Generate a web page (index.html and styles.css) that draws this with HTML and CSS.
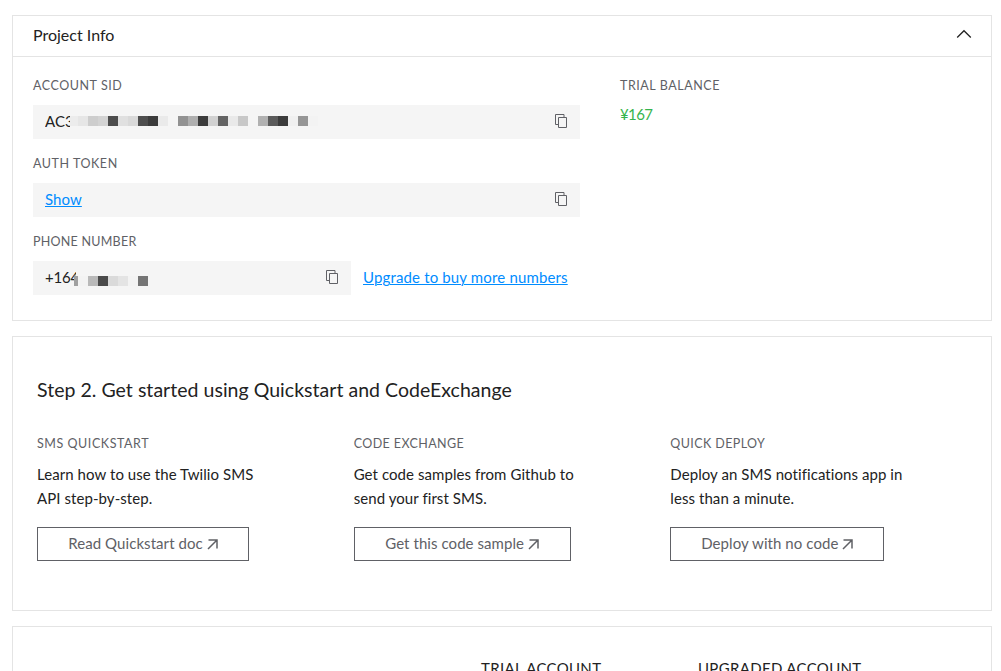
FILE: index.html
```html
<!DOCTYPE html>
<html lang="en">
<head>
<meta charset="utf-8">
<title>Project Info</title>
<link rel="stylesheet" href="styles.css">
</head>
<body>
<svg class="defs" width="0" height="0" aria-hidden="true">
  <symbol id="copy" viewBox="0 0 12 14"><path d="M9 3V.5H.5v10H3M3.5 3.5h8v10h-8z" fill="none" stroke="#606166"/></symbol>
  <symbol id="out" viewBox="0 0 12 12"><path d="M1.5 2H10v8.5M10 2L1 11" fill="none" stroke="currentColor" stroke-width="1.5"/></symbol>
</svg>
<main class="page">
  <section class="card info">
    <header class="card-head">
      <h2 class="head-title">Project Info</h2>
      <svg class="chevron" viewBox="0 0 16 10"><path d="M1.2 8.5L8 1.7l6.8 6.8" fill="none" stroke="#222" stroke-width="1.3"/></svg>
    </header>
    <div class="info-body">
      <div class="credentials">
        <h3 class="label l-sid">ACCOUNT SID</h3>
        <div class="field">
          <span class="value v-sid">AC3</span>
          <svg class="mask mask-sid" viewBox="0 0 250 10" shape-rendering="crispEdges">
            <path fill="#ececec" d="M0 0h8v10H0z"/><path fill="#e6e6e6" d="M8 0h10v10H8z"/><path fill="#cdcdcd" d="M18 0h10v10H18z"/><path fill="#d3d3d3" d="M28 0h10v10H28z"/><path fill="#4d4d4d" d="M38 0h10v10H38z"/><path fill="#e0e0e0" d="M48 0h10v10H48z"/><path fill="#d9d9d9" d="M58 0h10v10H58z"/><path fill="#4e4e4e" d="M68 0h10v10H68z"/><path fill="#3c3c3c" d="M78 0h10v10H78z"/><path fill="#eaeaea" d="M88 0h10v10H88z"/><path fill="#929292" d="M108 0h10v10H108z"/><path fill="#afafaf" d="M118 0h10v10H118z"/><path fill="#3c3c3c" d="M128 0h10v10H128z"/><path fill="#d1d1d1" d="M138 0h10v10H138z"/><path fill="#646464" d="M148 0h10v10H148z"/><path fill="#e9e9e9" d="M158 0h10v10H158z"/><path fill="#c8c8c8" d="M168 0h10v10H168z"/><path fill="#b1b1b1" d="M188 0h10v10H188z"/><path fill="#5b5b5b" d="M198 0h10v10H198z"/><path fill="#3c3c3c" d="M208 0h10v10H208z"/><path fill="#f0f0f0" d="M218 0h10v10H218z"/><path fill="#969696" d="M228 0h10v10H228z"/><path fill="#f3f3f3" d="M238 0h10v10H238z"/>
          </svg>
          <svg class="copy"><use href="#copy"/></svg>
        </div>
        <h3 class="label l-auth">AUTH TOKEN</h3>
        <div class="field"><a class="link show">Show</a><svg class="copy"><use href="#copy"/></svg></div>
        <h3 class="label l-phone">PHONE NUMBER</h3>
        <div class="phone-row">
          <div class="field phone">
            <span class="value v-phone">+164</span>
            <svg class="mask mask-phone" viewBox="0 0 74 10" shape-rendering="crispEdges">
              <path fill="#a0a0a0" d="M0 0h4v10H0z"/><path fill="#f3f3f3" d="M4 0h10v10H4z"/><path fill="#b9b9b9" d="M14 0h10v10H14z"/><path fill="#4a4a4a" d="M24 0h10v10H24z"/><path fill="#dadada" d="M34 0h10v10H34z"/><path fill="#e4e4e4" d="M44 0h10v10H44z"/><path fill="#f3f3f3" d="M54 0h10v10H54z"/><path fill="#757575" d="M64 0h10v10H64z"/>
            </svg>
            <svg class="copy"><use href="#copy"/></svg>
          </div>
          <a class="link upgrade">Upgrade to buy more numbers</a>
        </div>
      </div>
      <div class="balance">
        <h3 class="label l-balance">TRIAL BALANCE</h3>
        <div class="amount">¥167</div>
      </div>
    </div>
  </section>

  <section class="card step">
    <h2 class="step-title">Step 2. Get started using Quickstart and CodeExchange</h2>
    <div class="columns">
      <article>
        <h3 class="label l-sms">SMS QUICKSTART</h3>
        <p class="text">Learn how to use the Twilio SMS<br>API step-by-step.</p>
        <a class="button b1"><span>Read Quickstart doc</span><svg class="out"><use href="#out"/></svg></a>
      </article>
      <article>
        <h3 class="label l-code">CODE EXCHANGE</h3>
        <p class="text">Get code samples from Github to<br>send your first SMS.</p>
        <a class="button b2"><span>Get this code sample</span><svg class="out"><use href="#out"/></svg></a>
      </article>
      <article>
        <h3 class="label l-quick">QUICK DEPLOY</h3>
        <p class="text">Deploy an SMS notifications app in<br>less than a minute.</p>
        <a class="button b3"><span>Deploy with no code</span><svg class="out"><use href="#out"/></svg></a>
      </article>
    </div>
  </section>

  <section class="card compare">
    <h3 class="plan trial">TRIAL ACCOUNT</h3>
    <h3 class="plan upgraded">UPGRADED ACCOUNT</h3>
  </section>
</main>
</body>
</html>
```
FILE: styles.css
```css
* { box-sizing: border-box; }
html, body { margin: 0; height: 671px; overflow: hidden; background: #fff; }
body { font: 15px/24px Lato, "Open Sans", sans-serif; color: #222; letter-spacing: .07px; font-variant-ligatures: none; }
h2, h3, p { margin: 0; font-weight: 400; }
svg { display: block; flex: none; }
.defs { position: absolute; }
.page { height: 671px; overflow: hidden; padding: 15px 9px 0 12px; display: flex; flex-direction: column; gap: 15px; }
.card { border: 1px solid #e4e4e4; background: #fff; flex: none; }
.info { height: 306px; }
.card-head { height: 41px; border-bottom: 1px solid #e4e4e4; padding: 0 19px 2px 20px; display: flex; align-items: center; justify-content: space-between; }
.head-title { font-size: 16px; letter-spacing: 0; }
.chevron { width: 16px; height: 10px; margin-bottom: 2px; }
.info-body { display: flex; gap: 40px; padding: 20px; }
.credentials { width: 547px; }
.label { font-size: 12.5px; line-height: 18px; color: #606166; letter-spacing: .55px; margin-bottom: 10px; white-space: nowrap; }
.l-phone { letter-spacing: .25px; }
.l-code, .l-quick { letter-spacing: .4px; }
.field { position: relative; height: 34px; background: #f5f5f5; padding: 0 13px 0 12px; display: flex; align-items: center; justify-content: space-between; }
.field + .label { margin-top: 16px; }
.value, .show { margin-top: -2px; white-space: nowrap; }
.value { overflow: hidden; }
.v-sid { width: 25px; }
.v-phone { width: 31px; letter-spacing: -.2px; }
.mask { position: absolute; height: 10px; }
.mask-sid { left: 37px; top: 11px; width: 250px; }
.mask-phone { left: 41px; top: 15px; width: 74px; }
.copy { width: 12px; height: 14px; margin-top: -2px; }
.link { color: #008cff; text-decoration: underline; text-underline-offset: 1px; text-decoration-thickness: 1px; white-space: nowrap; }
.phone-row { display: flex; align-items: center; gap: 12px; }
.phone { width: 318px; }
.upgrade { margin-top: -2px; letter-spacing: .15px; }
.amount { color: #36b44d; margin-top: -3px; letter-spacing: -.6px; }
.step { height: 275px; padding: 41px 4px 0 24px; }
.step-title { font-size: 19.5px; line-height: 24px; letter-spacing: .03px; margin-bottom: 33px; white-space: nowrap; }
.columns { display: grid; grid-template-columns: repeat(3, 1fr); }
.columns .label { margin-bottom: 9px; }
.text { margin-bottom: 17px; white-space: nowrap; }
.button { display: flex; align-items: center; justify-content: center; gap: 4px; height: 34px; padding: 0 0 2px 1px; border: 1px solid #606166; color: #606166; white-space: nowrap; }
.out { width: 12px; height: 12px; margin-top: 2px; }
.b1 { width: 212px; }
.b2 { width: 217px; }
.b3 { width: 214px; }
.compare { height: 45px; border-bottom: 0; padding: 29px 0 0 468px; display: grid; grid-template-columns: 217px 1fr; }
.plan { font-size: 15px; letter-spacing: .33px; white-space: nowrap; }
```
